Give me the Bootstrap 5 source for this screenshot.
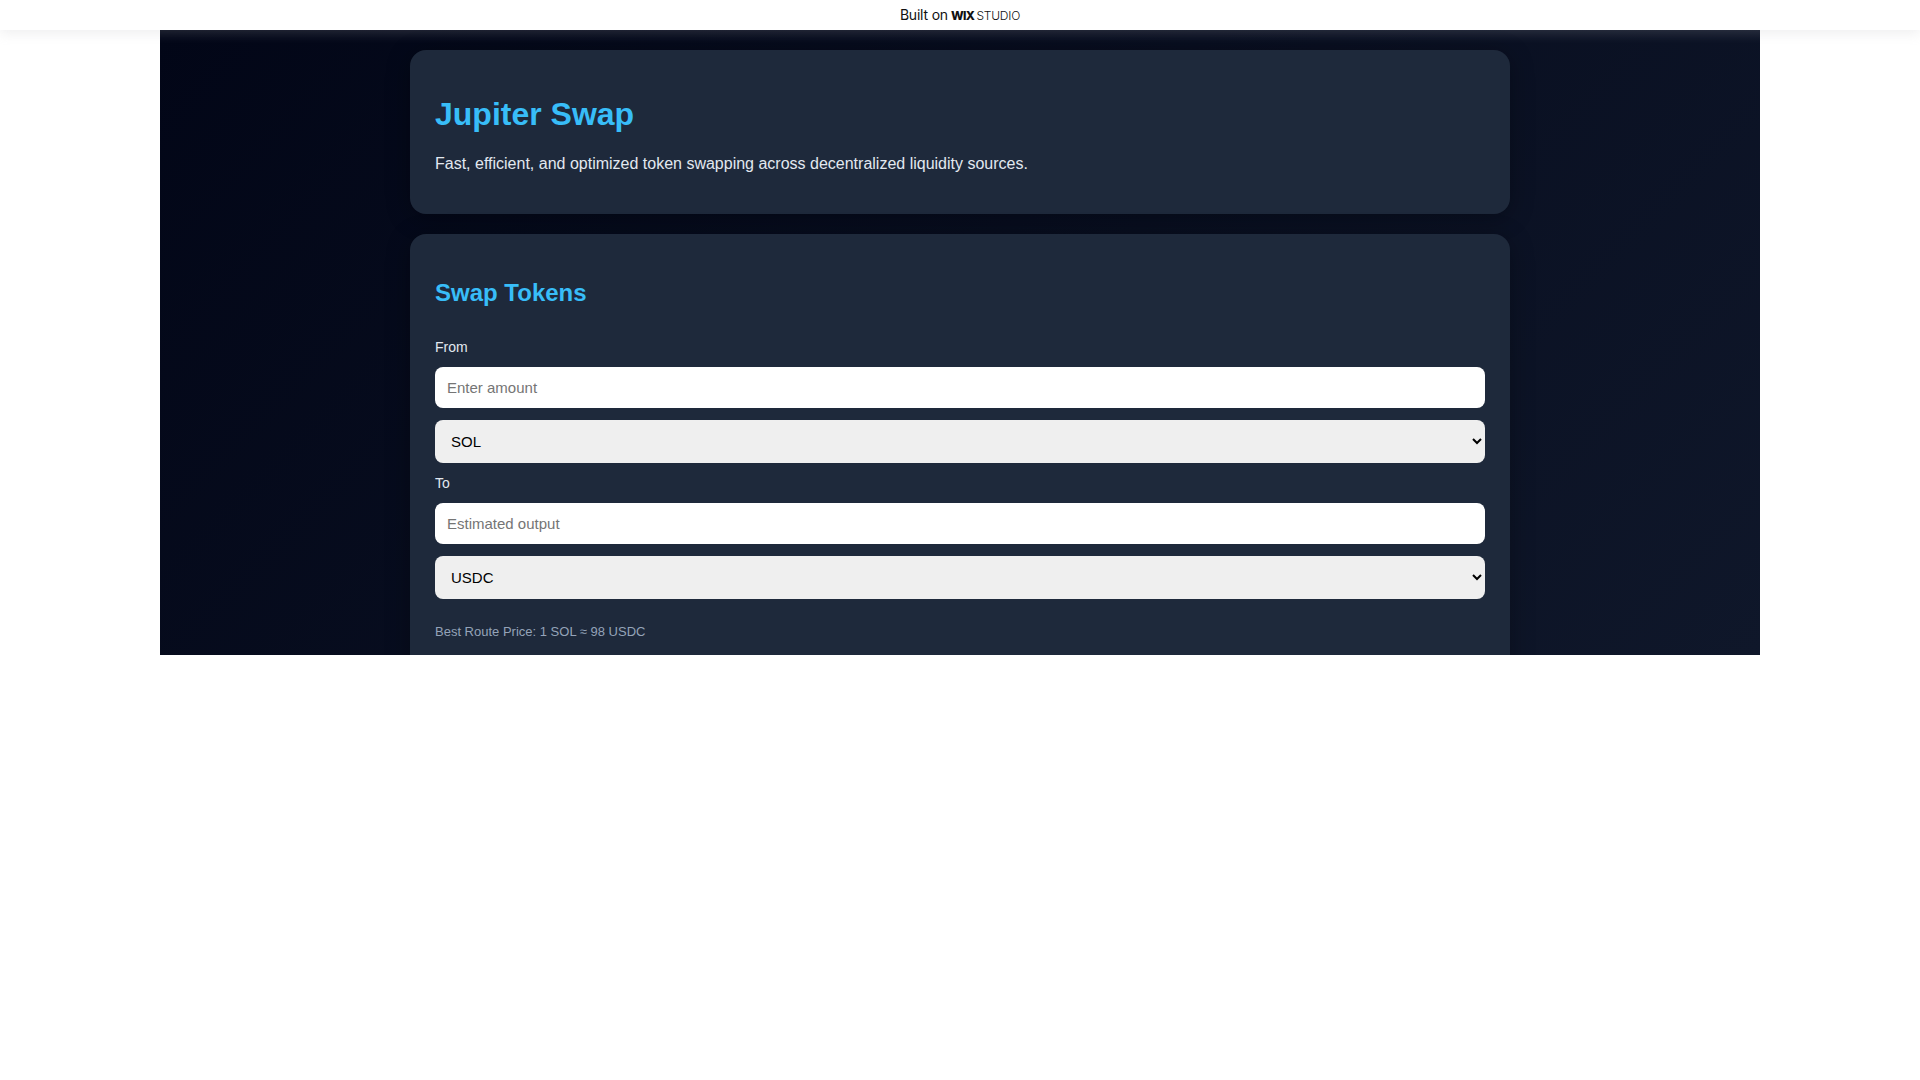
<!DOCTYPE html>
<html lang="en">
<head>
<meta charset="utf-8">
<title>Jupiter Swap</title>
<link href="https://cdn.jsdelivr.net/npm/bootstrap@5.3.0/dist/css/bootstrap.min.css" rel="stylesheet">
<style>
html, body { background: #fff; margin: 0; }
body { font-family: "Liberation Sans", Arial, sans-serif; height: 1080px; overflow: hidden; }
.wix-bar { height: 30px; line-height: 30px; background: #fff; box-shadow: 0 4px 12px rgba(180,180,185,.2); position: relative; z-index: 2; font-family: "Inter", sans-serif; font-size: 14px; color: #111; letter-spacing: -.2px; gap: 3px; }
.wix-lock { gap: 2px; }
.wix-bold { font-weight: 800; font-size: 12px; letter-spacing: -.6px; }
.wix-light { font-weight: 300; font-size: 12px; }
.stage { width: 1600px; height: 625px; overflow: hidden; background: linear-gradient(135deg, #020617, #0f172a); padding: 20px 250px 0; }
.panel-card { background: #1e293b; border-radius: 16px; padding: 25px; margin-bottom: 20px; box-shadow: 0 4px 25px rgba(0,0,0,.3); }
.hero-title { color: #38bdf8; font-size: 32px; font-weight: 700; line-height: normal; margin: 21.44px 0; }
.hero-sub { color: #e2e8f0; font-size: 16px; line-height: normal; margin: 0 0 16px; }
.sec-title { color: #38bdf8; font-size: 24px; font-weight: 700; line-height: normal; margin: 19.92px 0 32px; }
.fld-label { display: block; color: #e2e8f0; font-size: 14px; line-height: 16px; margin: 12px 0; }
.swap-input, .swap-select { display: block; width: 100%; border: 0; border-radius: 8px; font-size: 15px; font-family: "Liberation Sans", Arial, sans-serif; outline: 0; }
.swap-input { height: 41px; padding: 12px; background: #fff; margin-bottom: 12px; }
.swap-input::placeholder { color: #757575; opacity: 1; }
.swap-select { height: 43px; padding: 12px; background-color: #efefef; color: #000; margin-bottom: 12px; }
.route-note { color: #94a3b8; font-size: 13px; line-height: 15px; margin: 25px 0 60px; }
</style>
</head>
<body>
<div class="wix-bar d-flex align-items-baseline justify-content-center">
  <span>Built on</span><span class="wix-lock d-inline-flex align-items-baseline"><span class="wix-bold">WIX</span><span class="wix-light">STUDIO</span></span>
</div>
<main class="stage mx-auto">
  <section class="panel-card">
    <h1 class="hero-title">Jupiter Swap</h1>
    <p class="hero-sub">Fast, efficient, and optimized token swapping across decentralized liquidity sources.</p>
  </section>
  <section class="panel-card">
    <h2 class="sec-title">Swap Tokens</h2>
    <label class="fld-label">From</label>
    <input class="swap-input" type="text" placeholder="Enter amount">
    <select class="swap-select"><option>SOL</option></select>
    <label class="fld-label">To</label>
    <input class="swap-input" type="text" placeholder="Estimated output">
    <select class="swap-select"><option>USDC</option></select>
    <p class="route-note">Best Route Price: 1 SOL ≈ 98 USDC</p>
  </section>
</main>
<script src="https://cdn.jsdelivr.net/npm/bootstrap@5.3.0/dist/js/bootstrap.bundle.min.js"></script>
</body>
</html>
